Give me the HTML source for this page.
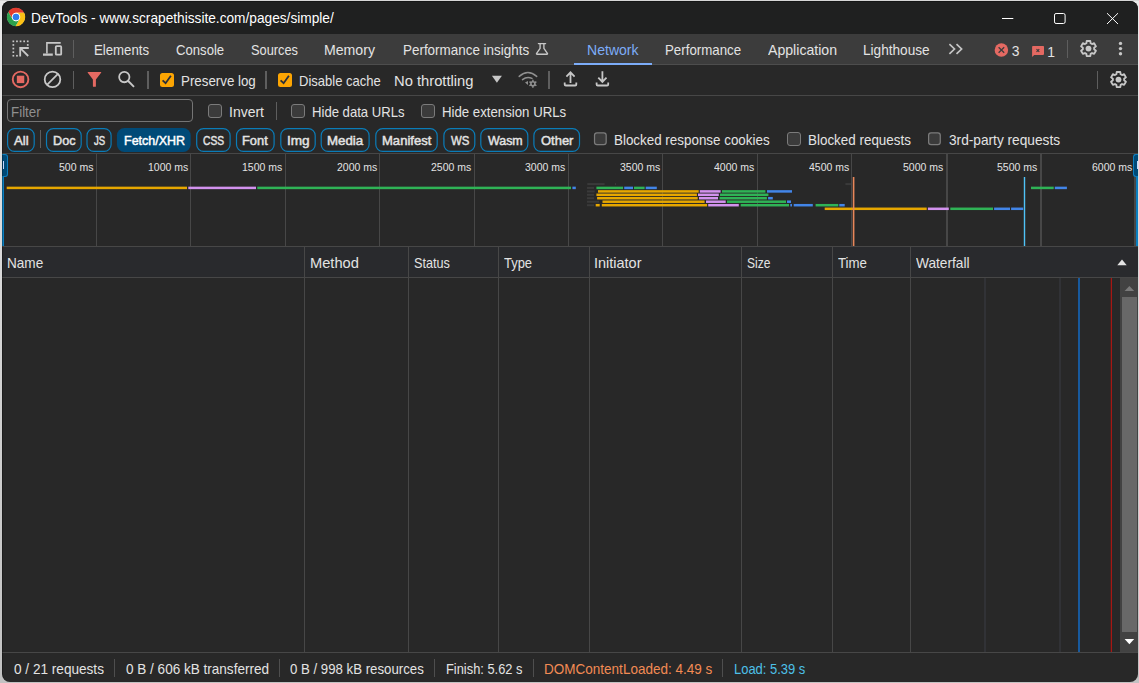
<!DOCTYPE html>
<html lang="en"><head><meta charset="utf-8"><title>DevTools - www.scrapethissite.com/pages/simple/</title>
<style>
html,body{margin:0;padding:0;}
body{width:1139px;height:683px;overflow:hidden;position:relative;background:linear-gradient(#d6d6d6,#d6d6d6) 0 0/100% 1px no-repeat,linear-gradient(180deg,#eaeaea 0%,#d4d4d4 50%,#c2c2c2 100%);font-family:'Liberation Sans',sans-serif;}
#win{position:absolute;left:0;top:0;width:1139px;height:683px;clip-path:inset(1px 1px 1px 2px round 8px);background:#282828;}
#win>*{position:absolute;}
.t{white-space:pre;transform-origin:0 0;line-height:20px;height:20px;}
.r{display:block;}
.vd{width:1px;background:#5e5e5e;}
.cb{width:12px;height:12px;border:1px solid #7b7b7b;border-radius:3px;background:#3b3b3b;}
.cbc{width:14px;height:14px;border-radius:2.5px;background:#fca503;}
.pill{height:21.3px;top:128px;border:1px solid #0b76ad;border-radius:8px;}
.pill.sel{background:#004a77;border-color:#004a77;}
.gl{top:154px;height:92px;width:1px;background:#474747;}
.cd{top:247px;height:405px;width:1px;background:#474747;}
.bar{height:3px;}
.y{background:#e6a700;}.p{background:#d292ee;}.g{background:#2fb356;}.b{background:#4285e8;}.k{background:#3a3a3a;}
svg{overflow:visible;}

</style></head>
<body>
<div id="win">
<!-- title bar -->
<div class="r" style="left:0;top:0;width:1139px;height:34px;background:#1f2020;"></div>
<svg style="left:5.9px;top:7.1px" width="20" height="20" viewBox="0 0 48 48"><circle cx="24" cy="24" r="21.5" fill="#fff"/><path d="M24.00 14.00L43.60 14.00A22.0 22.0 0 0 0 5.54 12.03L15.34 29.00A10.0 10.0 0 0 1 24.00 14.00z" fill="#e33b2e"/><path d="M32.66 29.00L22.86 45.97A22.0 22.0 0 0 0 43.60 14.00L24.00 14.00A10.0 10.0 0 0 1 32.66 29.00z" fill="#fbc116"/><path d="M15.34 29.00L5.54 12.03A22.0 22.0 0 0 0 22.86 45.97L32.66 29.00A10.0 10.0 0 0 1 15.34 29.00z" fill="#2ca14c"/><circle cx="24" cy="24" r="10.0" fill="#fff"/><circle cx="24" cy="24" r="8.0" fill="#2f7ded"/></svg>
<svg style="left:1000px;top:10px" width="122" height="16" viewBox="1000 10 122 16" fill="none" stroke="#fff" stroke-width="1">
  <path d="M1002 18.5H1013.3"/>
  <rect x="1054.5" y="13.5" width="10.6" height="10" rx="1.6"/>
  <path d="M1107 13.2L1118 24M1118 13.2L1107 24"/>
</svg>
<!-- tab bar -->
<div class="r" style="left:0;top:34px;width:1139px;height:30px;background:#3c3c3c;"></div>
<div class="r" style="left:0;top:64px;width:1139px;height:1px;background:#4d4d4d;"></div>
<svg style="left:8px;top:36px" width="60" height="26" viewBox="8 36 60 26" fill="none" stroke="#c7c7c7">
  <g fill="#c7c7c7" stroke="none">
    <rect x="12.5" y="40.5" width="1.7" height="1.7"/><rect x="16.1" y="40.5" width="1.7" height="1.7"/><rect x="19.7" y="40.5" width="1.7" height="1.7"/><rect x="23.3" y="40.5" width="1.7" height="1.7"/><rect x="26.9" y="40.5" width="1.7" height="1.7"/>
    <rect x="12.5" y="44.1" width="1.7" height="1.7"/><rect x="12.5" y="47.7" width="1.7" height="1.7"/><rect x="12.5" y="51.3" width="1.7" height="1.7"/><rect x="12.5" y="54.9" width="1.7" height="1.7"/>
    <rect x="26.9" y="44.1" width="1.7" height="1.7"/><rect x="16.1" y="54.9" width="1.7" height="1.7"/>
  </g>
  <path d="M28.8 48H20.2V56.5M20.6 48.4L28.2 56" stroke-width="1.8"/>
  <path d="M60.7 42.9H46.9V53.5" stroke-width="1.6"/>
  <path d="M43 54.6H52.8" stroke-width="2.4"/>
  <rect x="55.8" y="46.1" width="5.4" height="8.6" rx="0.8" stroke-width="1.8"/>
</svg>
<div class="vd" style="left:73px;top:40px;height:18px;"></div>
<svg style="left:530px;top:36px" width="30" height="26" viewBox="530 36 30 26" fill="none" stroke="#c7c7c7" stroke-width="1.35" stroke-linejoin="round" stroke-linecap="round">
  <path d="M538.4 43.6H545.6M540.1 43.6V48.4L536.6 53.3Q536.1 54.2 537.1 54.2H546.9Q547.9 54.2 547.4 53.3L543.9 48.4V43.6"/>
</svg>
<div class="r" style="left:573.6px;top:62.8px;width:78.4px;height:2.2px;background:#7cacf8;"></div>
<svg style="left:944px;top:40px" width="24" height="18" viewBox="944 40 24 18" fill="none" stroke="#c4c4c4" stroke-width="1.7">
  <path d="M949.4 44.2L954.5 49L949.4 53.9M956.5 44.2L961.6 49L956.5 53.9"/>
</svg>
<svg style="left:990px;top:38px" width="70" height="24" viewBox="990 38 70 24">
  <circle cx="1001.4" cy="50" r="6.75" fill="#e46962"/>
  <path d="M998.6 47.2L1004.2 52.8M1004.2 47.2L998.6 52.8" stroke="#3c3c3c" stroke-width="1.3" fill="none"/>
  <path d="M1033 46H1043.2Q1044 46 1044 46.8V54.1Q1044 54.9 1043.2 54.9H1034.2L1032.1 57V46.8Q1032.1 46 1033 46z" fill="#e46962"/>
  <path d="M1036.5 49.1L1039.3 51.9M1039.3 49.1L1036.5 51.9" stroke="#3c3c3c" stroke-width="1.1" fill="none"/>
</svg>
<div class="vd" style="left:1067px;top:40px;height:18px;"></div>
<svg style="left:1078px;top:38px" width="20" height="20" viewBox="1078 38 20 20"><path d="M1090.64 43.27L1090.31 41.01L1086.69 41.01L1086.36 43.27L1084.99 44.06L1082.88 43.22L1081.07 46.35L1082.86 47.76L1082.86 49.34L1081.07 50.75L1082.88 53.88L1084.99 53.04L1086.36 53.83L1086.69 56.09L1090.31 56.09L1090.64 53.83L1092.01 53.04L1094.12 53.88L1095.93 50.75L1094.14 49.34L1094.14 47.76L1095.93 46.35L1094.12 43.22L1092.01 44.06z" fill="none" stroke="#c7c7c7" stroke-width="1.85" stroke-linejoin="round"/><circle cx="1088.5" cy="48.55" r="2.9" fill="#c7c7c7"/></svg>
<svg style="left:1116px;top:40px" width="10" height="18" viewBox="1116 40 10 18" fill="#c7c7c7">
  <circle cx="1120.5" cy="43.4" r="1.7"/><circle cx="1120.5" cy="48.6" r="1.7"/><circle cx="1120.5" cy="53.8" r="1.7"/>
</svg>
<!-- toolbar -->
<div class="r" style="left:0;top:95px;width:1139px;height:1px;background:#474747;"></div>
<svg style="left:8px;top:66px" width="60" height="26" viewBox="8 66 60 26" fill="none">
  <circle cx="20.55" cy="79.4" r="7.8" stroke="#e46962" stroke-width="1.9"/>
  <rect x="16.85" y="75.7" width="7.4" height="7.4" fill="#e46962"/>
  <circle cx="52.5" cy="79.4" r="7.8" stroke="#c7c7c7" stroke-width="1.8"/>
  <path d="M47 84.9L58 73.9" stroke="#c7c7c7" stroke-width="1.8"/>
</svg>
<div class="vd" style="left:73px;top:71px;height:18px;"></div>
<svg style="left:80px;top:66px" width="60" height="26" viewBox="80 66 60 26" fill="none">
  <path d="M88 72.1H100.9Q101.6 72.1 101.1 72.8L95.9 79.6V86.2Q95.9 86.8 95.3 86.8H93.5Q92.9 86.8 92.9 86.2V79.6L87.8 72.8Q87.3 72.1 88 72.1z" fill="#e46962"/>
  <circle cx="124.3" cy="77.1" r="5.15" stroke="#c7c7c7" stroke-width="1.8"/>
  <path d="M128.2 81L134 86.9" stroke="#c7c7c7" stroke-width="1.9"/>
</svg>
<div class="vd" style="left:147px;top:71px;height:18px;width:2px;"></div>
<div class="cbc" style="left:160px;top:73px;"></div>
<svg style="left:160px;top:73px" width="14" height="14" viewBox="160 73 14 14" fill="none" stroke="#2a2f3a" stroke-width="1.8"><path d="M162.6 80.3L165.6 83.2L170.9 75.8"/></svg>
<div class="vd" style="left:265px;top:71px;height:18px;width:2px;"></div>
<div class="cbc" style="left:278px;top:73px;"></div>
<svg style="left:278px;top:73px" width="14" height="14" viewBox="160 73 14 14" fill="none" stroke="#2a2f3a" stroke-width="1.8"><path d="M162.6 80.3L165.6 83.2L170.9 75.8"/></svg>
<svg style="left:490px;top:70px" width="14" height="18" viewBox="490 70 14 18"><path d="M491.9 75.8H501.9L496.9 82.8z" fill="#c7c7c7"/></svg>
<svg style="left:516px;top:68px" width="24" height="22" viewBox="516 68 24 22" fill="none" stroke="#8f8f8f" stroke-width="1.5" stroke-linecap="round">
  <path d="M519.2 76.4Q527.9 68.6 536.7 76.4"/>
  <path d="M522.5 79.6Q527 76 532 78.4"/>
  <path d="M525 82.6L528 81V84.9z" fill="#8f8f8f" stroke="none"/>
  <circle cx="532.9" cy="83.7" r="2" stroke-width="1.6"/>
  <path d="M532.9 80.2V81.2M532.9 86.2V87.2M529.9 82L530.8 82.5M535 84.9L535.9 85.4M529.9 85.4L530.8 84.9M535 82.5L535.9 82" stroke-width="1.5"/>
</svg>
<div class="vd" style="left:548px;top:71px;height:18px;width:2px;"></div>
<svg style="left:560px;top:68px" width="52" height="22" viewBox="560 68 52 22" fill="none" stroke="#c7c7c7" stroke-width="1.8">
  <path d="M570.5 82.9V72.4M566.4 76.7L570.5 72.4L574.6 76.7"/>
  <path d="M564.7 82.5V84.4Q564.7 85.5 565.8 85.5H575.2Q576.3 85.5 576.3 84.4V82.5"/>
  <path d="M602.4 71.3V81.8M598.3 77.7L602.4 81.9L606.5 77.7"/>
  <path d="M596.6 82.5V84.4Q596.6 85.5 597.7 85.5H607.1Q608.2 85.5 608.2 84.4V82.5"/>
</svg>
<div class="vd" style="left:1097px;top:71px;height:18px;"></div>
<svg style="left:1108px;top:69px" width="20" height="20" viewBox="1108 69 20 20"><path d="M1120.64 74.27L1120.31 72.01L1116.69 72.01L1116.36 74.27L1114.99 75.06L1112.88 74.22L1111.07 77.35L1112.86 78.76L1112.86 80.34L1111.07 81.75L1112.88 84.88L1114.99 84.04L1116.36 84.83L1116.69 87.09L1120.31 87.09L1120.64 84.83L1122.01 84.04L1124.12 84.88L1125.93 81.75L1124.14 80.34L1124.14 78.76L1125.93 77.35L1124.12 74.22L1122.01 75.06z" fill="none" stroke="#c7c7c7" stroke-width="1.85" stroke-linejoin="round"/><circle cx="1118.5" cy="79.55" r="2.9" fill="#c7c7c7"/></svg>
<!-- filter row -->
<div class="r" style="left:7px;top:99px;width:184px;height:21px;border:1px solid #757575;border-radius:4px;"></div>
<div class="cb" style="left:208px;top:104px;"></div>
<div class="vd" style="left:276px;top:102px;height:18px;"></div>
<div class="cb" style="left:291px;top:104px;"></div>
<div class="cb" style="left:421px;top:104px;"></div>
<!-- pills -->
<svg style="left:0;top:120px" width="600" height="40" viewBox="0 120 600 40" fill="none" stroke="#0a7cb8" stroke-width="1.2">
<rect x="7.60" y="128.60" width="26.60" height="22.85" rx="6.9"/>
<rect x="46.50" y="128.60" width="34.70" height="22.85" rx="6.9"/>
<rect x="87.00" y="128.60" width="24.10" height="22.85" rx="6.9"/>
<rect x="116.90" y="128.00" width="73.80" height="24.05" rx="7.5" fill="#004a77" stroke="none"/>
<rect x="196.70" y="128.60" width="33.40" height="22.85" rx="6.9"/>
<rect x="236.50" y="128.60" width="37.60" height="22.85" rx="6.9"/>
<rect x="280.80" y="128.60" width="34.40" height="22.85" rx="6.9"/>
<rect x="321.20" y="128.60" width="47.90" height="22.85" rx="6.9"/>
<rect x="375.80" y="128.60" width="61.40" height="22.85" rx="6.9"/>
<rect x="443.90" y="128.60" width="30.90" height="22.85" rx="6.9"/>
<rect x="480.80" y="128.60" width="47.00" height="22.85" rx="6.9"/>
<rect x="533.90" y="128.60" width="45.60" height="22.85" rx="6.9"/>
</svg>
<div class="vd" style="left:40px;top:130px;height:18px;"></div>
<svg style="left:591px;top:130px" width="18" height="18" viewBox="591 130 18 18"><rect x="594.52" y="132.75" width="11.65" height="11.8" rx="2.4" fill="#3b3b3b" stroke="#7b7b7b" stroke-width="1.25"/></svg>
<div class="cb" style="left:787px;top:132px;"></div>
<svg style="left:926px;top:130px" width="18" height="18" viewBox="926 130 18 18"><rect x="928.62" y="132.75" width="11.65" height="11.8" rx="2.4" fill="#3b3b3b" stroke="#7b7b7b" stroke-width="1.25"/></svg>
<!-- overview -->
<div class="r" style="left:0;top:153px;width:1139px;height:1px;background:#474747;"></div>
<div class="r" style="left:0;top:246px;width:1139px;height:1px;background:#474747;"></div>
<div class="gl" style="left:96px;width:1px"></div>
<div class="gl" style="left:190px;width:1px"></div>
<div class="gl" style="left:285px;width:1px"></div>
<div class="gl" style="left:379px;width:1px"></div>
<div class="gl" style="left:474px;width:1px"></div>
<div class="gl" style="left:568px;width:1px"></div>
<div class="gl" style="left:662px;width:1px"></div>
<div class="gl" style="left:757px;width:1px"></div>
<div class="gl" style="left:851px;width:1px"></div>
<div class="gl" style="left:946px;width:2px"></div>
<div class="gl" style="left:1040px;width:2px"></div>
<div class="gl" style="left:1134px;width:2px"></div>
<svg style="left:0;top:154px" width="1139" height="92" viewBox="0 154 1139 92">
<rect x="587.3" y="183.10" width="17.3" height="2.0" fill="#3a3a3a"/>
<rect x="615.0" y="183.10" width="1.0" height="2.0" fill="#3a3a3a"/>
<rect x="845.4" y="183.10" width="5.6" height="2.0" fill="#3a3a3a"/>
<rect x="6.7" y="186.65" width="180.3" height="2.5" fill="#e6a700"/>
<rect x="188.3" y="186.65" width="67.7" height="2.5" fill="#d292ee"/>
<rect x="257.3" y="186.65" width="313.7" height="2.5" fill="#2fb356"/>
<rect x="572.4" y="186.65" width="3.4" height="2.5" fill="#4285e8"/>
<rect x="587.0" y="186.90" width="7.0" height="2.0" fill="#3a3a3a"/>
<rect x="596.4" y="186.65" width="26.7" height="2.5" fill="#2fb356"/>
<rect x="624.2" y="186.65" width="8.8" height="2.5" fill="#4285e8"/>
<rect x="634.0" y="186.65" width="10.6" height="2.5" fill="#2fb356"/>
<rect x="645.7" y="186.65" width="11.1" height="2.5" fill="#4285e8"/>
<rect x="1031.0" y="186.65" width="22.7" height="2.5" fill="#2fb356"/>
<rect x="1054.8" y="186.65" width="12.1" height="2.5" fill="#4285e8"/>
<rect x="587.0" y="190.40" width="7.7" height="2.0" fill="#3a3a3a"/>
<rect x="598.0" y="190.15" width="100.7" height="2.5" fill="#e6a700"/>
<rect x="699.8" y="190.15" width="20.8" height="2.5" fill="#d292ee"/>
<rect x="722.0" y="190.15" width="43.4" height="2.5" fill="#2fb356"/>
<rect x="767.0" y="190.15" width="25.0" height="2.5" fill="#4285e8"/>
<rect x="587.0" y="193.80" width="7.0" height="2.0" fill="#3a3a3a"/>
<rect x="596.4" y="193.55" width="100.5" height="2.5" fill="#e6a700"/>
<rect x="698.0" y="193.55" width="20.8" height="2.5" fill="#d292ee"/>
<rect x="720.0" y="193.55" width="48.4" height="2.5" fill="#2fb356"/>
<rect x="587.0" y="197.20" width="7.0" height="2.0" fill="#3a3a3a"/>
<rect x="597.1" y="196.95" width="100.6" height="2.5" fill="#e6a700"/>
<rect x="699.0" y="196.95" width="19.0" height="2.5" fill="#d292ee"/>
<rect x="719.6" y="196.95" width="47.3" height="2.5" fill="#2fb356"/>
<rect x="768.1" y="196.95" width="4.7" height="2.5" fill="#4285e8"/>
<rect x="587.0" y="200.70" width="12.0" height="2.0" fill="#3a3a3a"/>
<rect x="602.5" y="200.45" width="102.1" height="2.5" fill="#e6a700"/>
<rect x="706.0" y="200.45" width="19.7" height="2.5" fill="#d292ee"/>
<rect x="727.0" y="200.45" width="59.0" height="2.5" fill="#2fb356"/>
<rect x="787.0" y="200.45" width="4.0" height="2.5" fill="#4285e8"/>
<rect x="587.0" y="204.20" width="7.0" height="2.0" fill="#3a3a3a"/>
<rect x="595.7" y="203.95" width="4.0" height="2.5" fill="#e6a700"/>
<rect x="601.8" y="203.95" width="105.3" height="2.5" fill="#e6a700"/>
<rect x="708.2" y="203.95" width="30.6" height="2.5" fill="#d292ee"/>
<rect x="740.7" y="203.95" width="48.3" height="2.5" fill="#2fb356"/>
<rect x="790.3" y="203.95" width="1.7" height="2.5" fill="#4285e8"/>
<rect x="793.7" y="203.95" width="19.1" height="2.5" fill="#4285e8"/>
<rect x="815.6" y="203.95" width="22.7" height="2.5" fill="#2fb356"/>
<rect x="839.3" y="203.95" width="5.4" height="2.5" fill="#4285e8"/>
<rect x="824.7" y="207.55" width="102.0" height="2.5" fill="#e6a700"/>
<rect x="927.9" y="207.55" width="20.9" height="2.5" fill="#d292ee"/>
<rect x="950.3" y="207.55" width="42.7" height="2.5" fill="#2fb356"/>
<rect x="994.1" y="207.55" width="15.9" height="2.5" fill="#4285e8"/>
<rect x="1011.1" y="207.55" width="12.1" height="2.5" fill="#4285e8"/>
<rect x="852.8" y="177" width="1.6" height="69" fill="#e8875a"/>
<rect x="1023.8" y="177" width="1.4" height="69" fill="#4fc3f7"/>
</svg>
<div class="r" style="left:2px;top:154px;width:2.2px;height:92px;background:#0b7fc0"></div>
<div class="r" style="left:1px;top:154px;width:6px;height:20.5px;background:#004a77;border:1px solid #0b7fc0;border-left:none;border-radius:0 3px 3px 0"></div>
<div class="r" style="left:2.9px;top:161px;width:1.4px;height:8.2px;background:#c4d8ff"></div>
<div class="r" style="left:1136.4px;top:154px;width:2px;height:92px;background:#0b7fc0"></div>
<div class="r" style="left:1133px;top:154px;width:6px;height:20.5px;background:#004a77;border:1px solid #0b7fc0;border-right:none;border-radius:3px 0 0 3px"></div>
<div class="r" style="left:1136.9px;top:161px;width:1.4px;height:8.2px;background:#c4d8ff"></div>
<!-- table -->
<div class="r" style="left:0;top:247px;width:1139px;height:30px;background:#292a2d;"></div>
<div class="r" style="left:0;top:277px;width:1139px;height:1px;background:#474747;"></div>
<div class="cd" style="left:304px;"></div>
<div class="cd" style="left:408px;"></div>
<div class="cd" style="left:498px;"></div>
<div class="cd" style="left:589px;"></div>
<div class="cd" style="left:741px;"></div>
<div class="cd" style="left:832px;"></div>
<div class="cd" style="left:910px;"></div>
<div class="r" style="left:984px;top:278px;width:2px;height:374px;background:#313236;"></div>
<div class="r" style="left:1059px;top:278px;width:2px;height:374px;background:#313236;"></div>
<div class="r" style="left:1078px;top:278px;width:2px;height:374px;background:#185a9e;"></div>
<div class="r" style="left:1110px;top:278px;width:2px;height:374px;background:linear-gradient(90deg,#48211f 0 50%,#a61714 50% 100%);"></div>
<svg style="left:1116px;top:256px" width="14" height="12" viewBox="1116 256 14 12"><path d="M1117.3 265.2H1126.7L1122 259.4z" fill="#e3e3e3"/></svg>
<!-- scrollbar -->
<div class="r" style="left:1120px;top:278px;width:18px;height:374px;background:#424242;"></div>
<div class="r" style="left:1122.4px;top:297px;width:14.3px;height:335px;background:#686868;"></div>
<svg style="left:1120px;top:278px" width="18" height="374" viewBox="1120 278 18 374">
  <path d="M1124.6 291L1129.4 286L1134.2 291z" fill="#7a7a7a"/>
  <path d="M1124.6 639L1134.2 639L1129.4 644.2z" fill="#ffffff"/>
</svg>
<!-- status bar -->
<div class="r" style="left:0;top:652px;width:1139px;height:1px;background:#474747;"></div>
<div class="vd" style="left:114px;top:659px;height:18px;background:#4e4e4e"></div>
<div class="vd" style="left:279px;top:659px;height:18px;background:#4e4e4e"></div>
<div class="vd" style="left:434px;top:659px;height:18px;background:#4e4e4e"></div>
<div class="vd" style="left:533px;top:659px;height:18px;background:#4e4e4e"></div>
<div class="vd" style="left:722px;top:659px;height:18px;background:#4e4e4e"></div>
<div class="r" style="left:2px;top:1px;width:1136px;height:681px;box-sizing:border-box;border-left:1px solid rgba(0,0,0,0.28);border-top:1px solid rgba(0,0,0,0.3);border-radius:8px;pointer-events:none;"></div>

<span class="t" style="left:30.96px;top:8.18px;font-size:13.9px;transform:scaleX(0.9854);color:#ffffff;">DevTools - www.scrapethissite.com/pages/simple/</span>
<span class="t" style="left:94.00px;top:40.18px;font-size:13.9px;transform:scaleX(0.9516);color:#e3e3e3;">Elements</span>
<span class="t" style="left:176.15px;top:40.18px;font-size:13.9px;transform:scaleX(0.9446);color:#e3e3e3;">Console</span>
<span class="t" style="left:251.35px;top:40.18px;font-size:13.9px;transform:scaleX(0.9214);color:#e3e3e3;">Sources</span>
<span class="t" style="left:323.93px;top:40.18px;font-size:13.9px;transform:scaleX(1.0159);color:#e3e3e3;">Memory</span>
<span class="t" style="left:402.58px;top:40.18px;font-size:13.9px;transform:scaleX(0.9666);color:#e3e3e3;">Performance insights</span>
<span class="t" style="left:586.64px;top:40.18px;font-size:13.9px;transform:scaleX(1.0120);color:#7cacf8;">Network</span>
<span class="t" style="left:664.69px;top:40.18px;font-size:13.9px;transform:scaleX(0.9569);color:#e3e3e3;">Performance</span>
<span class="t" style="left:768.25px;top:40.18px;font-size:13.9px;transform:scaleX(1.0159);color:#e3e3e3;">Application</span>
<span class="t" style="left:862.97px;top:40.18px;font-size:13.9px;transform:scaleX(0.9800);color:#e3e3e3;">Lighthouse</span>
<span class="t" style="left:1011.75px;top:41.18px;font-size:13.9px;transform:scaleX(1.0000);color:#e3e3e3;">3</span>
<span class="t" style="left:1047.30px;top:42.18px;font-size:13.9px;transform:scaleX(1.0000);color:#e3e3e3;">1</span>
<span class="t" style="left:181.09px;top:71.18px;font-size:13.9px;transform:scaleX(0.9586);color:#e3e3e3;">Preserve log</span>
<span class="t" style="left:299.21px;top:71.18px;font-size:13.9px;transform:scaleX(0.9373);color:#e3e3e3;">Disable cache</span>
<span class="t" style="left:394.19px;top:71.18px;font-size:13.9px;transform:scaleX(1.0619);color:#e3e3e3;">No throttling</span>
<span class="t" style="left:11.29px;top:102.18px;font-size:13.9px;transform:scaleX(0.9622);color:#8f8f8f;">Filter</span>
<span class="t" style="left:228.84px;top:102.18px;font-size:13.9px;transform:scaleX(1.0065);color:#e3e3e3;">Invert</span>
<span class="t" style="left:311.51px;top:102.18px;font-size:13.9px;transform:scaleX(0.9443);color:#e3e3e3;">Hide data URLs</span>
<span class="t" style="left:442.00px;top:102.18px;font-size:13.9px;transform:scaleX(0.9519);color:#e3e3e3;">Hide extension URLs</span>
<span class="t" style="left:14.40px;top:130.63px;font-size:12.6px;transform:scaleX(1.0456);color:#e3e3e3;-webkit-text-stroke:0.45px;">All</span>
<span class="t" style="left:52.80px;top:130.63px;font-size:12.6px;transform:scaleX(1.0048);color:#e3e3e3;-webkit-text-stroke:0.45px;">Doc</span>
<span class="t" style="left:94.00px;top:130.63px;font-size:12.6px;transform:scaleX(0.7624);color:#e3e3e3;-webkit-text-stroke:0.45px;">JS</span>
<span class="t" style="left:123.61px;top:130.63px;font-size:12.6px;transform:scaleX(0.9919);color:#ffffff;-webkit-text-stroke:0.45px;">Fetch/XHR</span>
<span class="t" style="left:203.40px;top:130.63px;font-size:12.6px;transform:scaleX(0.8159);color:#e3e3e3;-webkit-text-stroke:0.45px;">CSS</span>
<span class="t" style="left:242.38px;top:130.63px;font-size:12.6px;transform:scaleX(1.0202);color:#e3e3e3;-webkit-text-stroke:0.45px;">Font</span>
<span class="t" style="left:286.52px;top:130.63px;font-size:12.6px;transform:scaleX(1.0806);color:#e3e3e3;-webkit-text-stroke:0.45px;">Img</span>
<span class="t" style="left:327.25px;top:130.63px;font-size:12.6px;transform:scaleX(1.0542);color:#e3e3e3;-webkit-text-stroke:0.45px;">Media</span>
<span class="t" style="left:381.86px;top:130.63px;font-size:12.6px;transform:scaleX(1.0362);color:#e3e3e3;-webkit-text-stroke:0.45px;">Manifest</span>
<span class="t" style="left:450.80px;top:130.63px;font-size:12.6px;transform:scaleX(0.9051);color:#e3e3e3;-webkit-text-stroke:0.45px;">WS</span>
<span class="t" style="left:488.10px;top:130.63px;font-size:12.6px;transform:scaleX(0.9850);color:#e3e3e3;-webkit-text-stroke:0.45px;">Wasm</span>
<span class="t" style="left:540.90px;top:130.63px;font-size:12.6px;transform:scaleX(1.0287);color:#e3e3e3;-webkit-text-stroke:0.45px;">Other</span>
<span class="t" style="left:614.39px;top:130.18px;font-size:13.9px;transform:scaleX(0.9643);color:#e3e3e3;">Blocked response cookies</span>
<span class="t" style="left:807.68px;top:130.18px;font-size:13.9px;transform:scaleX(0.9658);color:#e3e3e3;">Blocked requests</span>
<span class="t" style="left:948.85px;top:130.18px;font-size:13.9px;transform:scaleX(0.9852);color:#e3e3e3;">3rd-party requests</span>
<span class="t" style="left:59.05px;top:157.12px;font-size:11.2px;transform:scaleX(0.9409);color:#e3e3e3;">500 ms</span>
<span class="t" style="left:147.75px;top:157.12px;font-size:11.2px;transform:scaleX(0.9373);color:#e3e3e3;">1000 ms</span>
<span class="t" style="left:242.15px;top:157.12px;font-size:11.2px;transform:scaleX(0.9373);color:#e3e3e3;">1500 ms</span>
<span class="t" style="left:336.55px;top:157.12px;font-size:11.2px;transform:scaleX(0.9373);color:#e3e3e3;">2000 ms</span>
<span class="t" style="left:430.95px;top:157.12px;font-size:11.2px;transform:scaleX(0.9373);color:#e3e3e3;">2500 ms</span>
<span class="t" style="left:525.35px;top:157.12px;font-size:11.2px;transform:scaleX(0.9373);color:#e3e3e3;">3000 ms</span>
<span class="t" style="left:619.75px;top:157.12px;font-size:11.2px;transform:scaleX(0.9373);color:#e3e3e3;">3500 ms</span>
<span class="t" style="left:714.15px;top:157.12px;font-size:11.2px;transform:scaleX(0.9373);color:#e3e3e3;">4000 ms</span>
<span class="t" style="left:808.55px;top:157.12px;font-size:11.2px;transform:scaleX(0.9373);color:#e3e3e3;">4500 ms</span>
<span class="t" style="left:902.95px;top:157.12px;font-size:11.2px;transform:scaleX(0.9373);color:#e3e3e3;">5000 ms</span>
<span class="t" style="left:997.35px;top:157.12px;font-size:11.2px;transform:scaleX(0.9373);color:#e3e3e3;">5500 ms</span>
<span class="t" style="left:1091.75px;top:157.12px;font-size:11.2px;transform:scaleX(0.9373);color:#e3e3e3;">6000 ms</span>
<span class="t" style="left:6.57px;top:253.18px;font-size:13.9px;transform:scaleX(0.9772);color:#e3e3e3;">Name</span>
<span class="t" style="left:309.69px;top:253.18px;font-size:13.9px;transform:scaleX(1.0559);color:#e3e3e3;">Method</span>
<span class="t" style="left:414.25px;top:253.18px;font-size:13.9px;transform:scaleX(0.9129);color:#e3e3e3;">Status</span>
<span class="t" style="left:503.85px;top:253.18px;font-size:13.9px;transform:scaleX(0.9313);color:#e3e3e3;">Type</span>
<span class="t" style="left:594.21px;top:253.18px;font-size:13.9px;transform:scaleX(1.0417);color:#e3e3e3;">Initiator</span>
<span class="t" style="left:746.75px;top:253.18px;font-size:13.9px;transform:scaleX(0.8646);color:#e3e3e3;">Size</span>
<span class="t" style="left:837.75px;top:253.18px;font-size:13.9px;transform:scaleX(0.9534);color:#e3e3e3;">Time</span>
<span class="t" style="left:916.05px;top:253.18px;font-size:13.9px;transform:scaleX(0.9871);color:#e3e3e3;">Waterfall</span>
<span class="t" style="left:13.85px;top:659.18px;font-size:13.9px;transform:scaleX(0.9789);color:#e3e3e3;">0 / 21 requests</span>
<span class="t" style="left:125.95px;top:659.18px;font-size:13.9px;transform:scaleX(0.9748);color:#e3e3e3;">0 B / 606 kB transferred</span>
<span class="t" style="left:290.45px;top:659.18px;font-size:13.9px;transform:scaleX(0.9518);color:#e3e3e3;">0 B / 998 kB resources</span>
<span class="t" style="left:445.82px;top:659.18px;font-size:13.9px;transform:scaleX(0.9257);color:#e3e3e3;">Finish: 5.62 s</span>
<span class="t" style="left:543.88px;top:659.18px;font-size:13.9px;transform:scaleX(0.9731);color:#f28b54;">DOMContentLoaded: 4.49 s</span>
<span class="t" style="left:733.52px;top:659.18px;font-size:13.9px;transform:scaleX(0.9323);color:#4dc0e8;">Load: 5.39 s</span>
</div>
</body></html>
